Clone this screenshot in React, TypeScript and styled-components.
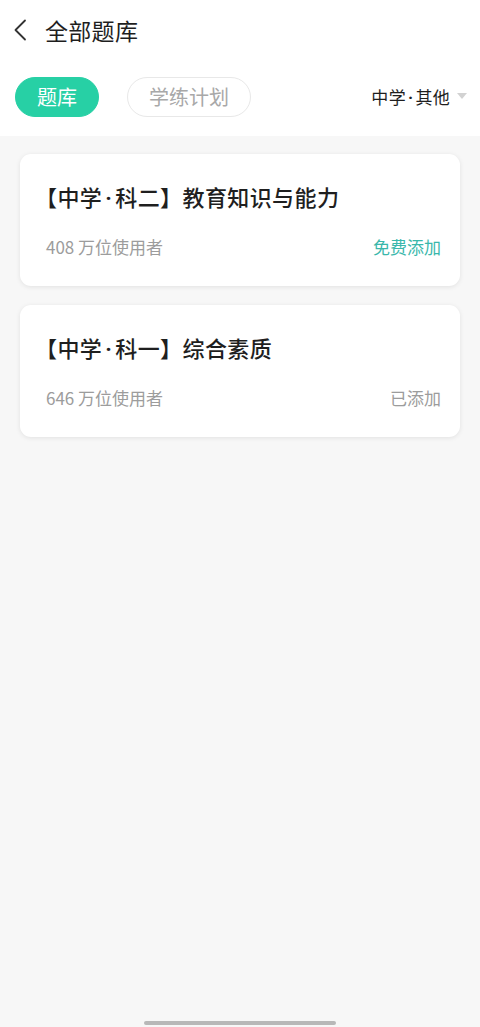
import React from "react";
import styled, { createGlobalStyle } from "styled-components";

const Global = createGlobalStyle`
  html, body { margin: 0; padding: 0; background: #ffffff; }
  body { font-family: "Noto Sans CJK SC", "Noto Sans", sans-serif; }
  * { box-sizing: border-box; }
`;

const Page = styled.div`
  width: 480px;
  min-height: 1027px;
  display: flex;
  flex-direction: column;
  background: #f7f7f7;
`;

const Top = styled.div`
  background: #ffffff;
  display: flex;
  flex-direction: column;
`;

const Header = styled.div`
  height: 60px;
  display: flex;
  align-items: center;
  padding-left: 12px;
  gap: 17px;
`;

const BackButton = styled.button`
  border: none;
  background: none;
  padding: 0;
  width: 16px;
  height: 24px;
  display: flex;
  align-items: center;
  justify-content: center;
`;

const Title = styled.h1`
  margin: 0;
  font-size: 23px;
  line-height: 30px;
  font-weight: 400;
  color: #1e1e1e;
  letter-spacing: 0.3px;
`;

const TabRow = styled.div`
  margin-top: 17px;
  margin-bottom: 19px;
  padding: 0 13px 0 15px;
  height: 40px;
  display: flex;
  align-items: center;
  gap: 28px;
`;

const Pill = styled.button<{ $active?: boolean }>`
  height: 40px;
  padding: 0 21px;
  border-radius: 20px;
  font-family: inherit;
  font-size: 20px;
  line-height: 38px;
  border: 1px solid ${(p) => (p.$active ? "#27d0a5" : "#e8e8e8")};
  background: ${(p) => (p.$active ? "#27d0a5" : "#ffffff")};
  color: ${(p) => (p.$active ? "#ffffff" : "#a8a8a8")};
`;

const Filter = styled.div`
  margin-left: auto;
  display: flex;
  align-items: center;
  gap: 7px;
  font-size: 17px;
  line-height: 24px;
  color: #1e1e1e;
  letter-spacing: 0.3px;
`;

const Dot = styled.span<{ $gap: number }>`
  font-family: "Roboto", "Liberation Sans", sans-serif;
  font-weight: 700;
  line-height: 1;
  margin: 0 ${(p) => p.$gap}px;
`;

const Caret = styled.span`
  width: 0;
  height: 0;
  border-left: 5.5px solid transparent;
  border-right: 5.5px solid transparent;
  border-top: 6px solid #d2d2d2;
  margin-top: -2px;
`;

const List = styled.div`
  display: flex;
  flex-direction: column;
  gap: 19px;
  padding: 18px 20px;
`;

const Card = styled.div`
  background: #ffffff;
  border-radius: 11px;
  box-shadow: 0 1px 5px rgba(0, 0, 0, 0.09);
  padding: 27px 19px 28px 26px;
  display: flex;
  flex-direction: column;
  gap: 23px;
`;

const CardTitle = styled.div`
  font-size: 22px;
  line-height: 30px;
  height: 30px;
  color: #1f1f1f;
  margin-left: -11px;
  font-weight: 500;
  letter-spacing: 0.4px;
  white-space: nowrap;
`;

const CardFoot = styled.div`
  display: flex;
  align-items: center;
  justify-content: space-between;
  height: 24px;
  font-size: 17px;
`;

const Users = styled.span`
  color: #9c9c9c;
`;

const Action = styled.span<{ $added?: boolean }>`
  color: ${(p) => (p.$added ? "#9c9c9c" : "#3ab7ab")};
`;

const HomeBar = styled.div`
  margin-top: auto;
  display: flex;
  justify-content: center;
  padding-bottom: 2px;
`;

const HomeLine = styled.div`
  width: 192px;
  height: 4px;
  border-radius: 2px;
  background: #b8b8b8;
`;

const banks = [
  { tag: ["中学", "科二"], name: "教育知识与能力", users: "408 万位使用者", added: false },
  { tag: ["中学", "科一"], name: "综合素质", users: "646 万位使用者", added: true },
];

export default function App() {
  return (
    <>
      <Global />
      <Page>
        <Top>
          <Header>
            <BackButton aria-label="返回">
              <svg width="14" height="22" viewBox="0 0 14 22" fill="none">
                <path d="M12 1.5 L2.5 11 L12 20.5" stroke="#333" strokeWidth="1.8" strokeLinecap="round" strokeLinejoin="round" />
              </svg>
            </BackButton>
            <Title>全部题库</Title>
          </Header>
          <TabRow>
            <Pill $active>题库</Pill>
            <Pill>学练计划</Pill>
            <Filter>
              <span>
                中学<Dot $gap={2}>·</Dot>其他
              </span>
              <Caret />
            </Filter>
          </TabRow>
        </Top>
        <List>
          {banks.map((b) => (
            <Card key={b.name}>
              <CardTitle>
                【{b.tag[0]}
                <Dot $gap={3}>·</Dot>
                {b.tag[1]}】{b.name}
              </CardTitle>
              <CardFoot>
                <Users>{b.users}</Users>
                <Action $added={b.added}>{b.added ? "已添加" : "免费添加"}</Action>
              </CardFoot>
            </Card>
          ))}
        </List>
        <HomeBar>
          <HomeLine />
        </HomeBar>
      </Page>
    </>
  );
}
